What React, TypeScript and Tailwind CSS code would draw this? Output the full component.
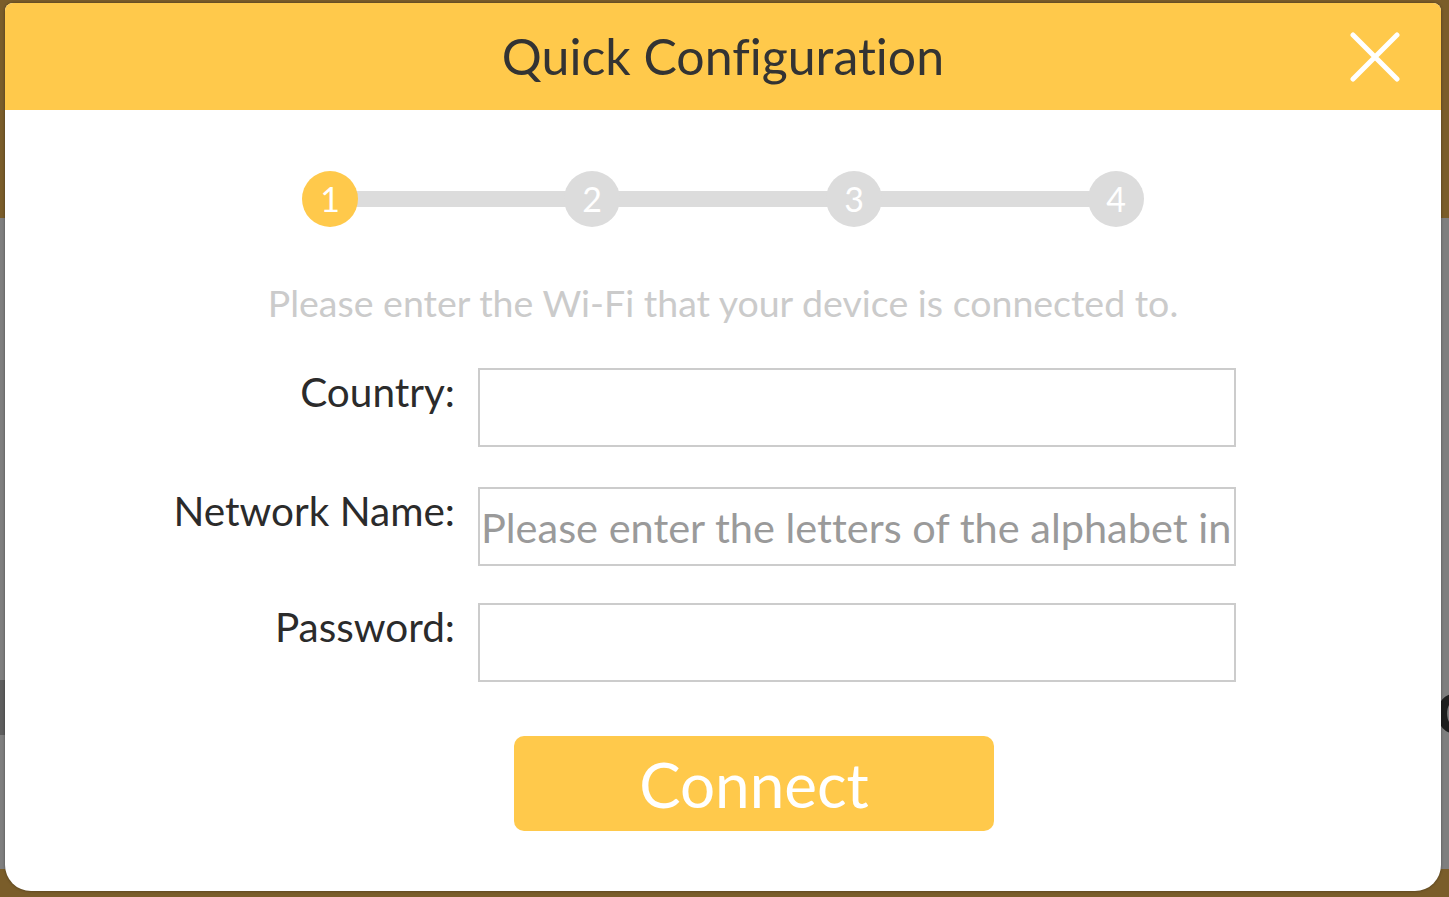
import React from 'react';

const steps = [1, 2, 3, 4];

const Stepper: React.FC = () => {
    return (
        <div className="flex items-center w-[842px] mx-auto">
            {steps.map((n, i) => (
                <React.Fragment key={n}>
                    {i > 0 && <div className="flex-1 h-[16px] bg-[#dcdcdc] -mx-[2px]" />}
                    <div
                        className={
                            n === 1
                                ? 'relative w-[56px] h-[56px] rounded-full bg-[#ffc94b] flex items-center justify-center text-white text-[34px] leading-none'
                                : 'relative w-[56px] h-[56px] rounded-full bg-[#dcdcdc] flex items-center justify-center text-white text-[34px] leading-none'
                        }
                    >
                        {n}
                    </div>
                </React.Fragment>
            ))}
        </div>
    );
};

const FormRow: React.FC<{ label: string; placeholder?: string; type?: string; className?: string }> = ({
    label,
    placeholder,
    type = 'text',
    className = '',
}) => {
    return (
        <div className={`flex items-start ${className}`}>
            <label className="w-[450px] shrink-0 text-right text-[40.5px] leading-[48px] text-[#2b2b2b]">{label}</label>
            <input
                type={type}
                placeholder={placeholder}
                className="ml-[23px] w-[758px] h-[79px] border-2 border-[#cccccc] bg-white px-[1px] text-[41.5px] text-[#333] outline-none placeholder:text-[#9a9a9a]"
            />
        </div>
    );
};

const App: React.FC = () => {
    return (
        <div className="relative w-[1449px] h-[897px] overflow-hidden bg-[#7f7f7f] font-['Lato','Noto_Sans',sans-serif] [font-variant-ligatures:none]">
            {/* dimmed page behind the dialog */}
            <div className="flex flex-col h-full">
                <div className="h-[218px] bg-[#7a5d2a]" />
                <div className="relative flex-1 bg-[#7f7f7f]">
                    <div className="w-[5px] h-[55px] mt-[462px] bg-[#5e5e5e]" />
                    <span className="absolute left-[1435px] top-[448px] text-[76px] leading-none font-bold text-[#1e1e1e]">c</span>
                </div>
                <div className="h-[28px] bg-[#7a5d2a]" />
            </div>

            {/* dialog */}
            <div className="absolute left-[5px] top-[3px] w-[1436px] h-[888px] bg-white rounded-t-[8px] rounded-b-[26px] overflow-hidden shadow-[0_0_3px_rgba(0,0,0,0.4)]">
                <div className="relative h-[107px] bg-[#ffc94b] flex items-center justify-center">
                    <h1 className="text-[50px] leading-none text-[#333333] -mt-[2px]">Quick Configuration</h1>
                    <button className="absolute right-[38px] top-[26px] w-[56px] h-[56px] flex items-center justify-center">
                        <svg width="50" height="50" viewBox="0 0 50 50" fill="none">
                            <path d="M3 3 L47 47 M47 3 L3 47" stroke="white" strokeWidth="5" strokeLinecap="round" />
                        </svg>
                    </button>
                </div>

                <div className="pt-[61px]">
                    <Stepper />
                    <p className="mt-[54px] text-center text-[37.5px] leading-[44px] text-[#cbcbcb]">
                        Please enter the Wi-Fi that your device is connected to.
                    </p>

                    <FormRow label="Country:" className="mt-[43px]" />
                    <FormRow label="Network Name:" placeholder="Please enter the letters of the alphabet in" className="mt-[40px]" />
                    <FormRow label="Password:" type="password" className="mt-[37px]" />

                    <button className="block ml-[509px] mt-[54px] w-[480px] h-[95px] rounded-[10px] bg-[#ffc94b] text-white text-[62px] leading-none">
                        Connect
                    </button>
                </div>
            </div>
        </div>
    );
};

export default App;
